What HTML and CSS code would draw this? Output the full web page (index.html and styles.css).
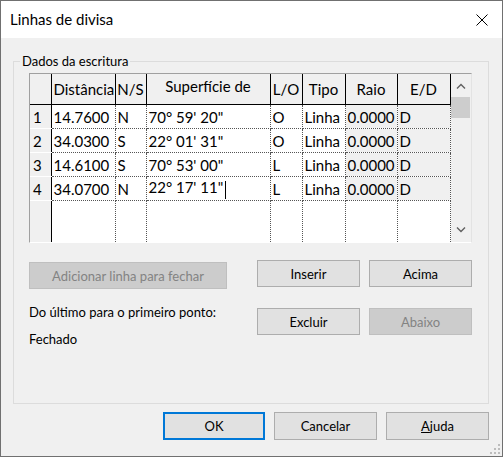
FILE: index.html
```html
<!DOCTYPE html>
<html lang="pt">
<head>
<meta charset="UTF-8">
<title>Linhas de divisa</title>
<link rel="stylesheet" href="styles.css">
</head>
<body>
<div class="window">
    <div class="titlebar">
        <span class="title">Linhas de divisa</span>
        <svg class="close" width="12" height="12" viewBox="0 0 12 12">
            <path d="M0.5 0.5 L11.5 11.5 M11.5 0.5 L0.5 11.5" stroke="#000" stroke-width="1" fill="none"/>
        </svg>
    </div>
    <div class="content">
        <fieldset class="group">
            <legend>Dados da escritura</legend>
            <div class="grid">
                <table class="sheet">
                    <colgroup>
                        <col class="c-hdr"><col class="c-dist"><col class="c-ns"><col class="c-sup">
                        <col class="c-lo"><col class="c-tipo"><col class="c-raio"><col class="c-ed">
                    </colgroup>
                    <thead>
                        <tr>
                            <th></th>
                            <th class="left">Distância</th>
                            <th>N/S</th>
                            <th class="sup">Superfície de</th>
                            <th>L/O</th>
                            <th>Tipo</th>
                            <th>Raio</th>
                            <th>E/D</th>
                        </tr>
                    </thead>
                    <tbody>
                        <tr>
                            <td class="num">1</td><td>14.7600</td><td>N</td><td>70° 59' 20"</td>
                            <td>O</td><td>Linha</td><td class="ro">0.0000</td><td class="ro">D</td>
                        </tr>
                        <tr>
                            <td class="num">2</td><td>34.0300</td><td>S</td><td>22° 01' 31"</td>
                            <td>O</td><td>Linha</td><td class="ro">0.0000</td><td class="ro">D</td>
                        </tr>
                        <tr>
                            <td class="num">3</td><td>14.6100</td><td>S</td><td>70° 53' 00"</td>
                            <td>L</td><td>Linha</td><td class="ro">0.0000</td><td class="ro">D</td>
                        </tr>
                        <tr>
                            <td class="num">4</td><td>34.0700</td><td>N</td><td>22° 17' 11"<span class="caret"></span></td>
                            <td>L</td><td>Linha</td><td class="ro">0.0000</td><td class="ro">D</td>
                        </tr>
                        <tr class="filler">
                            <td class="num"></td><td></td><td></td><td></td>
                            <td></td><td></td><td></td><td></td>
                        </tr>
                    </tbody>
                </table>
                <div class="vscroll">
                    <svg class="arrow" width="10" height="6" viewBox="0 0 10 6">
                        <path d="M1 5.5 L5 1.5 L9 5.5" stroke="#606060" stroke-width="1.4" fill="none"/>
                    </svg>
                    <div class="thumb"></div>
                    <div class="track"></div>
                    <svg class="arrow" width="10" height="6" viewBox="0 0 10 6">
                        <path d="M1 0.5 L5 4.5 L9 0.5" stroke="#606060" stroke-width="1.4" fill="none"/>
                    </svg>
                </div>
            </div>
            <div class="controls">
                <div class="left-col">
                    <button class="btn wide" disabled>Adicionar linha para fechar</button>
                    <div class="label">Do último para o primeiro ponto:</div>
                    <div class="label">Fechado</div>
                </div>
                <div class="btn-grid">
                    <button class="btn">Inserir</button>
                    <button class="btn">Acima</button>
                    <button class="btn">Excluir</button>
                    <button class="btn" disabled>Abaixo</button>
                </div>
            </div>
        </fieldset>
        <div class="footer">
            <button class="btn default">OK</button>
            <button class="btn">Cancelar</button>
            <button class="btn"><u>A</u>juda</button>
        </div>
    </div>
    <div class="grip">
        <i></i><i></i><i></i><i></i><i></i><i></i>
    </div>
</div>
</body>
</html>
```

FILE: styles.css
```css
body {
    margin: 0;
    padding: 0;
    background-color: #f0f0f0;
    font-family: Lato, "Noto Sans", sans-serif;
    font-size: 13px;
    color: #000;
}
.window {
    position: relative;
    width: 503px;
    height: 457px;
    box-sizing: border-box;
    border: 1px solid #707070;
    background-color: #f0f0f0;
    display: flex;
    flex-direction: column;
}
.titlebar {
    height: 37px;
    background-color: #fff;
    display: flex;
    align-items: center;
    justify-content: space-between;
    padding: 0 14px 0 9px;
    flex-shrink: 0;
}
.title {
    font-size: 15px;
    padding-bottom: 1px;
}
.close {
    display: block;
    margin-top: 1px;
}
.content {
    flex: 1;
    display: flex;
    flex-direction: column;
    padding: 15px 13px 0 12px;
}
.group {
    margin: 0;
    height: 351px;
    box-sizing: border-box;
    border: 1px solid #dcdcdc;
    padding: 0 15px 0 15px;
}
.group legend {
    padding: 0 2px;
    margin-left: -9px;
    font-size: 13px;
    line-height: 16px;
}
.grid {
    margin-top: 4px;
    display: flex;
    width: 443px;
    height: 170px;
    box-sizing: border-box;
    border-top: 1px solid #a0a0a0;
    border-left: 1px solid #a0a0a0;
    border-right: 1px solid #e3e3e3;
    border-bottom: 1px solid #fff;
}
.sheet {
    border-collapse: collapse;
    table-layout: fixed;
    width: 420px;
    background-color: #fff;
    font-size: 15px;
}
.c-hdr { width: 21px; }
.c-dist { width: 64px; }
.c-ns { width: 31px; }
.c-sup { width: 124px; }
.c-lo { width: 32px; }
.c-tipo { width: 43px; }
.c-raio { width: 52px; }
.c-ed { width: 53px; }
.sheet th {
    height: 27px;
    padding: 0;
    font-weight: normal;
    background-color: #f0f0f0;
    border-right: 1px solid #000;
    border-bottom: 1px solid #000;
    text-align: center;
    white-space: nowrap;
    overflow: hidden;
}
.sheet th.left {
    text-align: left;
    padding-left: 2px;
}
.sheet th.sup {
    vertical-align: top;
    padding-top: 3px;
}
.sheet td {
    height: 23px;
    padding: 0 0 0 2px;
    border-right: 1px dotted #555;
    border-bottom: 1px dotted #555;
    white-space: nowrap;
    overflow: hidden;
}
.sheet td.num {
    background-color: #f0f0f0;
    border-right: 1px solid #000;
    border-bottom: 1px solid #fff;
    padding-left: 3px;
}
.sheet td.ro {
    background-color: #f0f0f0;
}
.sheet tr.filler td {
    height: auto;
    border-bottom: none;
}
.caret {
    display: inline-block;
    width: 1px;
    height: 18px;
    margin-left: 2px;
    vertical-align: middle;
    background-color: #000;
}
.vscroll {
    width: 21px;
    background-color: #f0f0f0;
    display: flex;
    flex-direction: column;
    align-items: center;
}
.vscroll .arrow {
    display: block;
    margin: 9px 0;
}
.thumb {
    width: 19px;
    height: 21px;
    margin-top: -1px;
    background-color: #cdcdcd;
}
.track {
    flex: 1;
}
.controls {
    display: flex;
    margin-top: 17px;
    width: 443px;
}
.left-col {
    width: 230px;
    display: flex;
    flex-direction: column;
}
.btn {
    font-family: Lato, "Noto Sans", sans-serif;
    font-size: 13px;
    color: #000;
    background-color: #e1e1e1;
    border: 1px solid #adadad;
    width: 103px;
    height: 27px;
    padding: 0;
    margin: 0;
}
.btn:disabled {
    background-color: #cccccc;
    border-color: #bfbfbf;
    color: #838383;
}
.btn.wide {
    width: 198px;
    margin-top: 2px;
}
.label {
    margin-top: 15px;
    line-height: 16px;
}
.left-col .label + .label {
    margin-top: 11px;
}
.btn-grid {
    display: grid;
    grid-template-columns: 103px 103px;
    gap: 9px 9px;
}
.footer {
    display: flex;
    justify-content: flex-end;
    gap: 9px;
    margin-top: 8px;
}
.footer .btn {
    height: 28px;
}
.footer .btn.default {
    width: 102px;
    border: 2px solid #0078d7;
}
.grip {
    position: absolute;
    right: 2px;
    bottom: 2px;
    width: 10px;
    height: 10px;
}
.grip i {
    position: absolute;
    width: 2px;
    height: 2px;
    background-color: #bcbcbc;
}
.grip i:nth-child(1) { right: 0; bottom: 0; }
.grip i:nth-child(2) { right: 4px; bottom: 0; }
.grip i:nth-child(3) { right: 8px; bottom: 0; }
.grip i:nth-child(4) { right: 0; bottom: 4px; }
.grip i:nth-child(5) { right: 4px; bottom: 4px; }
.grip i:nth-child(6) { right: 0; bottom: 8px; }
```
